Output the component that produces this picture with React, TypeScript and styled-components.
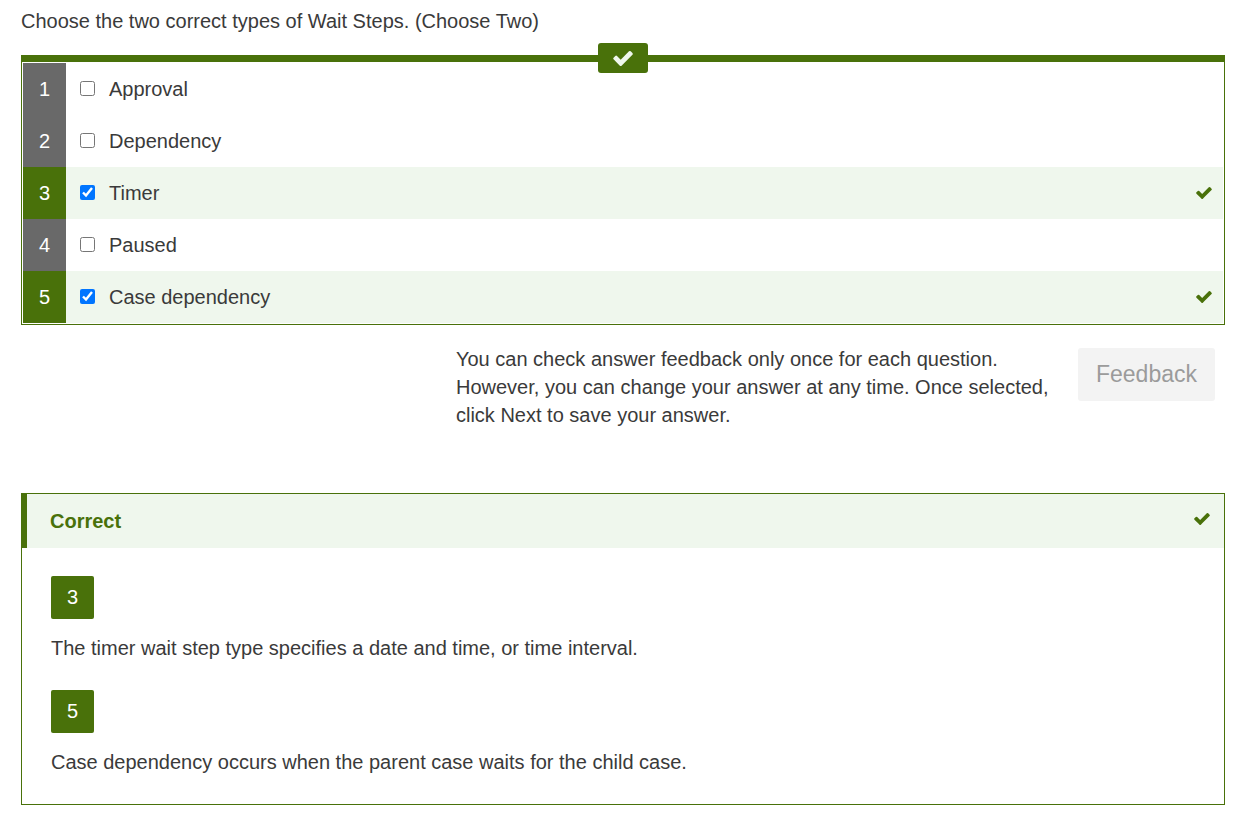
import React, { useState } from "react";
import styled, { createGlobalStyle } from "styled-components";

const green = "#49710a";
const mint = "#eff7ed";
const grey = "#696969";

const GlobalStyle = createGlobalStyle`
  *, *::before, *::after { box-sizing: border-box; }
  body {
    margin: 0;
    background: #fff;
    color: #3a3a3a;
    font-family: "Liberation Sans", Arial, sans-serif;
    font-size: 20px;
    line-height: 28px;
  }
`;

const Page = styled.main`
  padding: 7px 23px 15px 21px;
`;

const Question = styled.fieldset`
  margin: 0;
  padding: 0;
  border: 0;
  min-width: 0;
`;

const Prompt = styled.legend`
  padding: 0;
  margin-bottom: 20px;
`;

const Answers = styled.div`
  position: relative;
  padding: 1px;
  border: 1px solid ${green};
  border-top-width: 7px;
`;

const StatusBadge = styled.span`
  position: absolute;
  top: -19px;
  left: 50%;
  transform: translateX(-50%);
  display: flex;
  align-items: center;
  justify-content: center;
  width: 50px;
  height: 30px;
  border-radius: 3px;
  background: ${green};
  color: ${mint};
`;

const Option = styled.label<{ $correct: boolean }>`
  display: flex;
  align-items: center;
  height: 52px;
  padding-right: 11px;
  background: ${(p) => (p.$correct ? mint : "#fff")};
`;

const OptionNumber = styled.span<{ $correct: boolean }>`
  flex: none;
  align-self: stretch;
  display: flex;
  align-items: center;
  justify-content: center;
  width: 43px;
  background: ${(p) => (p.$correct ? green : grey)};
  color: #fff;
`;

const Tick = styled.input`
  flex: none;
  width: 15px;
  height: 15px;
  margin: 0 14px 1px;
`;

const OptionText = styled.span`
  flex: 1;
`;

const CheckMark = styled.span`
  display: flex;
  align-items: center;
  height: 24px;
  padding-bottom: 1px;
  color: ${green};
`;

const Actions = styled.div`
  display: flex;
  justify-content: flex-end;
  align-items: flex-start;
  gap: 24px;
  padding: 20px 10px 0 0;
`;

const Hint = styled.p`
  flex: 0 1 598px;
  margin: 0;
`;

const FeedbackButton = styled.button`
  flex: none;
  margin: 3px 0 0;
  padding: 12px 18px 13px;
  border: 0;
  border-radius: 3px;
  background: #f3f3f3;
  color: #9b9b9b;
  font: inherit;
  font-size: 23px;
`;

const Result = styled.section`
  margin-top: 64px;
  border: 1px solid ${green};
`;

const ResultHeader = styled.header`
  display: flex;
  align-items: flex-start;
  justify-content: space-between;
  margin-left: -1px;
  padding: 13px 14px 13px 23px;
  border-left: 6px solid ${green};
  background: ${mint};
  color: ${green};
`;

const ResultTitle = styled.h2`
  margin: 0;
  font-size: 20px;
  font-weight: bold;
`;

const Explanations = styled.div`
  display: flex;
  flex-direction: column;
  gap: 28px;
  padding: 28px 29px;
`;

const Explanation = styled.div`
  display: flex;
  flex-direction: column;
  align-items: flex-start;
  gap: 15px;
`;

const NumberChip = styled.span`
  display: flex;
  align-items: center;
  justify-content: center;
  width: 43px;
  height: 43px;
  padding-bottom: 2px;
  border-radius: 2px;
  background: ${green};
  color: #fff;
`;

const ExplanationText = styled.p`
  margin: 0;
`;

function Check({ width, height }: { width: number; height: number }) {
  return (
    <svg width={width} height={height} viewBox="121 334 1550 1188" aria-hidden="true">
      <path
        fill="currentColor"
        d="M1671 566q0 40-28 68l-724 724-136 136q-28 28-68 28t-68-28l-136-136-362-362q-28-28-28-68t28-68l136-136q28-28 68-28t68 28l294 295 656-657q28-28 68-28t68 28l136 136q28 28 28 68z"
      />
    </svg>
  );
}

const options = [
  { id: 1, text: "Approval", correct: false },
  { id: 2, text: "Dependency", correct: false },
  { id: 3, text: "Timer", correct: true },
  { id: 4, text: "Paused", correct: false },
  { id: 5, text: "Case dependency", correct: true },
];

const explanations = [
  { id: 3, text: "The timer wait step type specifies a date and time, or time interval." },
  { id: 5, text: "Case dependency occurs when the parent case waits for the child case." },
];

export default function App() {
  const [selected, setSelected] = useState<number[]>([3, 5]);
  const toggle = (id: number) =>
    setSelected((s) => (s.includes(id) ? s.filter((x) => x !== id) : [...s, id]));

  return (
    <>
      <GlobalStyle />
      <Page>
        <Question>
          <Prompt>Choose the two correct types of Wait Steps. (Choose Two)</Prompt>
          <Answers>
            <StatusBadge>
              <Check width={20} height={15} />
            </StatusBadge>
            {options.map((o) => (
              <Option key={o.id} htmlFor={`option-${o.id}`} $correct={o.correct}>
                <OptionNumber $correct={o.correct}>{o.id}</OptionNumber>
                <Tick
                  type="checkbox"
                  id={`option-${o.id}`}
                  checked={selected.includes(o.id)}
                  onChange={() => toggle(o.id)}
                />
                <OptionText>{o.text}</OptionText>
                {o.correct && (
                  <CheckMark>
                    <Check width={16} height={12} />
                  </CheckMark>
                )}
              </Option>
            ))}
          </Answers>
        </Question>

        <Actions>
          <Hint>
            You can check answer feedback only once for each question. However, you can change
            your answer at any time. Once selected, click Next to save your answer.
          </Hint>
          <FeedbackButton type="button" disabled>
            Feedback
          </FeedbackButton>
        </Actions>

        <Result>
          <ResultHeader>
            <ResultTitle>Correct</ResultTitle>
            <CheckMark>
              <Check width={16} height={12} />
            </CheckMark>
          </ResultHeader>
          <Explanations>
            {explanations.map((e) => (
              <Explanation key={e.id}>
                <NumberChip>{e.id}</NumberChip>
                <ExplanationText>{e.text}</ExplanationText>
              </Explanation>
            ))}
          </Explanations>
        </Result>
      </Page>
    </>
  );
}
